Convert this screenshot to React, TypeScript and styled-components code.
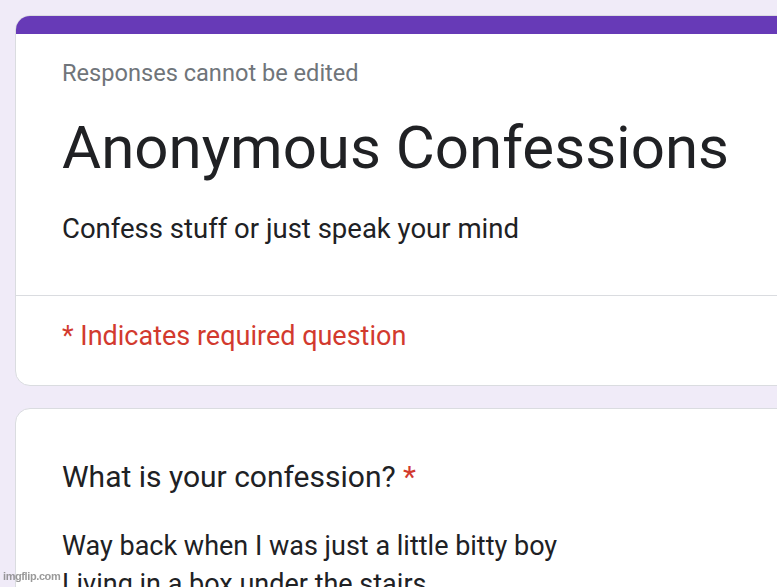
import React from 'react';
import styled, { createGlobalStyle } from 'styled-components';

const GlobalStyle = createGlobalStyle`
  html, body {
    margin: 0;
    padding: 0;
    overflow: hidden;
    background: #f0ebf8;
  }
  body {
    font-family: Roboto, 'Noto Sans', Arial, sans-serif;
  }
`;

const Page = styled.div`
  height: 587px;
  padding: 15px 0 0 15px;
  display: flex;
  flex-direction: column;
  gap: 22px;
  box-sizing: border-box;
`;

const Card = styled.section`
  width: 860px;
  background: #fff;
  border: 1px solid #dadce0;
  border-radius: 15px;
  overflow: hidden;
  flex-shrink: 0;
`;

const AccentBar = styled.div`
  height: 19px;
  margin: -1px -1px 0;
  background: #673ab7;
`;

const Section = styled.div<{ $top: number; $bottom: number }>`
  padding: ${({ $top }) => $top}px 46px ${({ $bottom }) => $bottom}px;
  display: flex;
  flex-direction: column;
`;

const Divider = styled.hr`
  margin: 0;
  border: none;
  border-top: 1px solid #dadce0;
`;

const Notice = styled.div`
  font-size: 23.6px;
  line-height: 30px;
  color: #70757a;
`;

const Title = styled.h1`
  margin: 24px 0 0;
  font-size: 60px;
  font-weight: 400;
  line-height: 72px;
  color: #202124;
`;

const Description = styled.div`
  margin-top: 28px;
  font-size: 27.5px;
  line-height: 34px;
  color: #202124;
`;

const Required = styled.div`
  font-size: 27px;
  line-height: 34px;
  color: #d23a2e;
`;

const Question = styled.div`
  font-size: 30px;
  line-height: 40px;
  color: #202124;
`;

const Star = styled.span`
  color: #d23a2e;
`;

const Answer = styled.div`
  margin-top: 30px;
  font-size: 27px;
  line-height: 38px;
  color: #202124;
`;

const Watermark = styled.div`
  position: fixed;
  left: 3px;
  bottom: 5px;
  font-family: 'Liberation Sans', Arial, sans-serif;
  font-size: 11px;
  font-weight: 700;
  letter-spacing: -0.4px;
  color: rgba(120, 120, 120, 0.75);
`;

export default function App() {
  return (
    <>
      <GlobalStyle />
      <Page>
        <Card>
          <AccentBar />
          <Section $top={24} $bottom={49}>
            <Notice>Responses cannot be edited</Notice>
            <Title>Anonymous Confessions</Title>
            <Description>Confess stuff or just speak your mind</Description>
          </Section>
          <Divider />
          <Section $top={23} $bottom={32}>
            <Required>* Indicates required question</Required>
          </Section>
        </Card>
        <Card>
          <Section $top={48} $bottom={40}>
            <Question>
              What is your confession? <Star>*</Star>
            </Question>
            <Answer>
              Way back when I was just a little bitty boy
              <br />
              Living in a box under the stairs
            </Answer>
          </Section>
        </Card>
      </Page>
      <Watermark>imgflip.com</Watermark>
    </>
  );
}
